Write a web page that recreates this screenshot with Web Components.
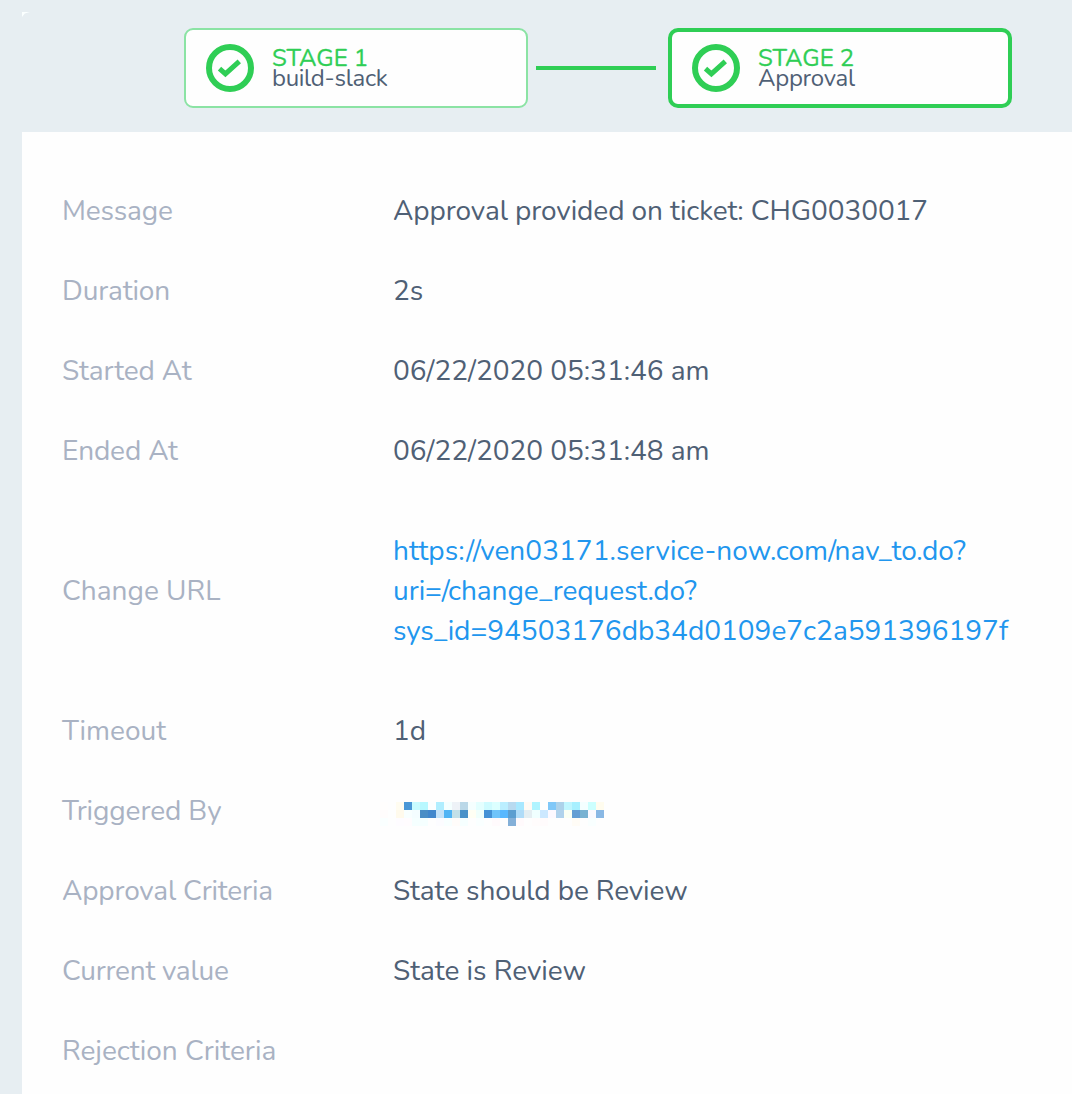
<!DOCTYPE html>
<html lang="en">
<head>
<meta charset="utf-8">
<title>Pipeline execution</title>
<style>
body{margin:0;width:1072px;height:1094px;overflow:hidden;background:#e7eef2;font-family:Nunito,Lato,"Open Sans",sans-serif;color:#4f6075}
</style>
</head>
<body>
<pipeline-page></pipeline-page>
<script>
// A single line; "adjust" spreads that many pixels over its letter gaps.
customElements.define('text-line', class extends HTMLElement {
  connectedCallback() {
    const gaps = this.textContent.length - 1;
    const spacing = Number(this.getAttribute('adjust') || 0) / gaps;
    this.attachShadow({mode: 'open'}).innerHTML = `<style>:host{display:block;white-space:nowrap;letter-spacing:${spacing.toFixed(4)}px}</style><slot></slot>`;
  }
});

customElements.define('status-check', class extends HTMLElement {
  connectedCallback() {
    this.attachShadow({mode: 'open'}).innerHTML = `<style>:host{display:block;width:48px;height:48px;flex:none}svg{display:block}</style>
    <svg width="48" height="48" viewBox="0 0 48 48" fill="none" stroke="#2fce55"><circle cx="24" cy="24" r="21" stroke-width="6"/><path d="M13.5 24.7 19.4 29.9 33.3 17.3" stroke-width="5"/></svg>`;
  }
});

customElements.define('stage-card', class extends HTMLElement {
  connectedCallback() {
    this.attachShadow({mode: 'open'}).innerHTML = `<style>
    :host{display:flex;box-sizing:border-box;width:344px;height:80px;flex:none;align-items:center;padding-left:20px;background:#fefefe;border:2px solid #8be3a4;border-radius:9px}
    :host([selected]){border:4px solid #2fce55;border-radius:10px}
    .copy{display:flex;flex-direction:column;margin-left:18px;font-size:24px;line-height:20px;padding-bottom:1px}
    .name{color:#2fce55;-webkit-text-stroke:.3px #2fce55}
    </style><status-check></status-check><div class="copy"><div class="name"><slot name="title"></slot></div><div><slot></slot></div></div>`;
  }
});

customElements.define('stage-link', class extends HTMLElement {
  connectedCallback() {
    this.attachShadow({mode: 'open'}).innerHTML = `<style>:host{display:block;width:120px;height:4px;margin:0 12px 0 8px;background:#2fce55}</style>`;
  }
});

customElements.define('detail-row', class extends HTMLElement {
  connectedCallback() {
    this.attachShadow({mode: 'open'}).innerHTML = `<style>
    :host{display:flex;align-items:center;padding:20px 0;font-size:28px;line-height:40px}
    :host([tall]){padding:40px 0}
    .label{width:331px;flex:none;color:#a9b2c3}
    .value{min-height:40px}
    :host([tall]) .value{color:#2196ee}
    </style><div class="label"><slot name="label"></slot></div><div class="value"><slot></slot></div>`;
  }
});

// A name obscured by a mosaic of 8px cells.
customElements.define('masked-name', class extends HTMLElement {
  connectedCallback() {
    const rows = [
      'fffefd fefefe fffcf0 4a97d6 c8fbff b8f8ff fbfeff b0eeff f4ffff eef2f7 bad8e8 f5ffff e4ffff cffbff dcffff bbeeff b8daf0 a8e8ff fffaf4 b0f4ff fefefe 80c8f8 acd2ea c0f6ff a8f0ff f4ffff ccfffe fffcee',
      'fffcfc fefefe fffaec f8ffff f4fdff 4a8ec6 4187cc c4e2f8 50b4f4 c2e0e8 4a92c8 fffff4 f0fffc 4592d6 70c4fa 58b8ff 5c9ed0 b0dcf8 e4eef2 f0ffff cce8ff fdf9ff b0d2ec fafff4 649ed4 78b2d2 fbfaff 8ab8e4',
      'faffff fefefe fefcff fffcfe f5ffff f5ffff fefefe fcfcff f8ffff fffcfa f6ffff fefefe faffff fefefe fffafc fefefe 84b0d8 fffafc fefefe fffcfc fffbfc fefefe fefefe fefefe fffcf6 fefefe f9ffff fefefe'];
    const cells = rows.map((r, y) => r.split(' ').map((c, x) => `<rect x="${x * 8}" y="${y * 8}" width="8" height="8" fill="#${c}"/>`).join('')).join('');
    this.attachShadow({mode: 'open'}).innerHTML = `<style>:host{display:block;margin-left:-13px;padding:11px 0 5px}svg{display:block}</style>
    <svg width="224" height="24" shape-rendering="crispEdges">${cells}</svg>`;
  }
});

customElements.define('pipeline-page', class extends HTMLElement {
  connectedCallback() {
    const row = (label, la, value, va) => `<detail-row><text-line slot="label" adjust="${la}">${label}</text-line>${value ? `<text-line adjust="${va}">${value}</text-line>` : ''}</detail-row>`;
    this.attachShadow({mode: 'open'}).innerHTML = `<style>
    :host{display:flex;flex-direction:column;height:1094px}
    header{display:flex;align-items:center;box-sizing:border-box;height:132px;flex:none;padding:28px 0 24px 22px}
    .corner{align-self:flex-start;width:8px;height:5px;margin:-16px 154px 0 0;background:#fbffff;clip-path:polygon(0 0,100% 0,35% 30%,0 100%)}
    main{flex:1;margin-left:22px;padding:39px 0 0 40px;background:#fefefe}
    </style>
    <header><div class="corner"></div>
      <stage-card><text-line slot="title">STAGE 1</text-line><text-line adjust="-3">build-slack</text-line></stage-card>
      <stage-link></stage-link>
      <stage-card selected><text-line slot="title">STAGE 2</text-line><text-line adjust="-2">Approval</text-line></stage-card>
    </header>
    <main>
      ${row('Message', -1, 'Approval provided on ticket: CHG0030017', -3)}
      ${row('Duration', -1, '2s', 0)}
      ${row('Started At', -1, '06/22/2020 05:31:46 am', -.5)}
      ${row('Ended At', -1, '06/22/2020 05:31:48 am', -.5)}
      <detail-row tall><text-line slot="label">Change URL</text-line>
        <text-line adjust="2">https://ven03171.service-now.com/nav_to.do?</text-line>
        <text-line adjust="-1">uri=/change_request.do?</text-line>
        <text-line>sys_id=94503176db34d0109e7c2a591396197f</text-line></detail-row>
      ${row('Timeout', 0, '1d', 0)}
      <detail-row><text-line slot="label" adjust="-1">Triggered By</text-line><masked-name></masked-name></detail-row>
      ${row('Approval Criteria', -3, 'State should be Review', -2)}
      ${row('Current value', -3, 'State is Review', 0)}
      ${row('Rejection Criteria', 0)}
    </main>`;
  }
});
</script>
</body>
</html>
